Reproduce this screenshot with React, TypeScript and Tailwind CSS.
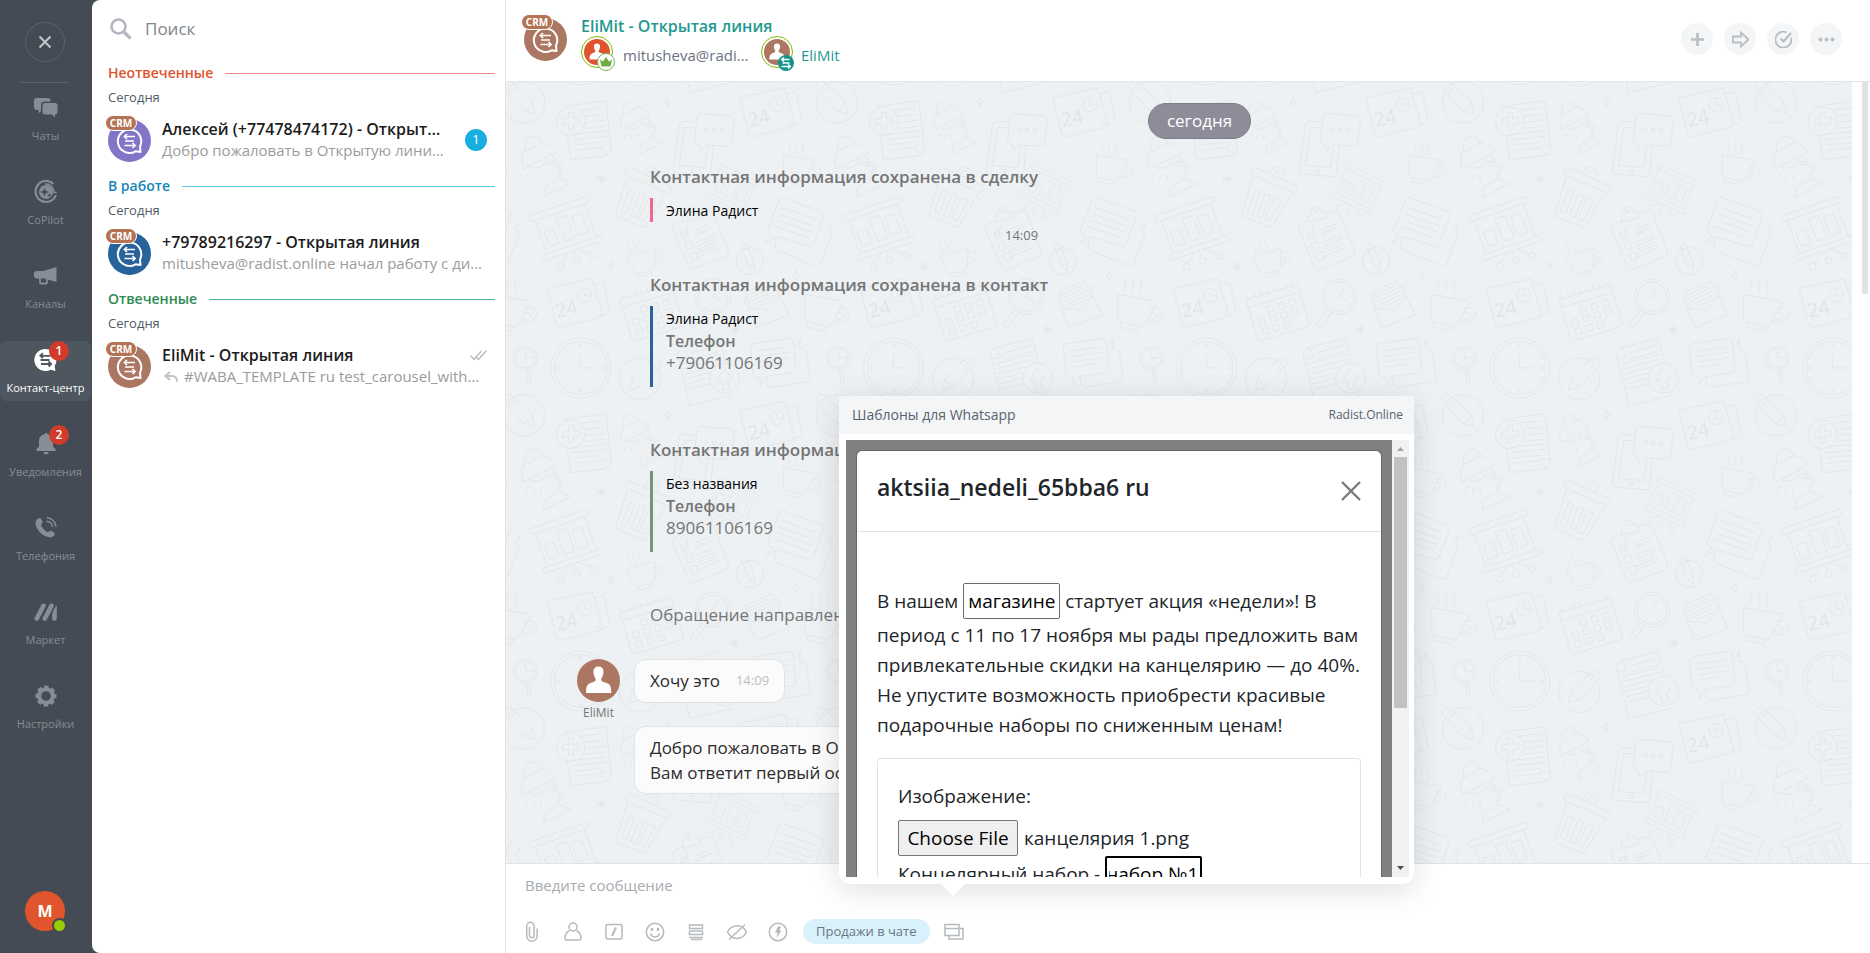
import React, { useEffect, useRef } from "react";

type Tone = "violet" | "blue" | "brown";

interface NavItem {
  title: string;
  icon: React.ElementType;
  badge?: number;
  active?: boolean;
}

interface Dialog {
  section: string;
  textColor: string;
  lineColor: string;
  tone: Tone;
  title: string;
  text: string;
  counter?: number;
  reply?: boolean;
  read?: boolean;
}

const tones: Record<Tone, string> = {
  violet: "#8474c8",
  blue: "#28629a",
  brown: "#ac7762",
};

// Sidebar icons
function ChatsIcon() {
  return (
    <svg width="24" height="20" viewBox="0 0 24 20" fill="currentColor">
      <path d="M3 0h10.500a3 3 0 0 1 3 3v.5H11a4 4 0 0 0-4 4V13L4.500 15.500V12H3a3 3 0 0 1-3-3V3a3 3 0 0 1 3-3z" />
      <path d="M11 5h10a2.500 2.500 0 0 1 2.500 2.500v6.500a2.500 2.500 0 0 1-2.500 2.500v3L18 16.500h-7A2.500 2.500 0 0 1 8.500 14V7.500A2.500 2.500 0 0 1 11 5z" />
    </svg>
  );
}

function CopilotIcon() {
  return (
    <svg width="24" height="24" viewBox="0 0 24 24" fill="none">
      <path d="M19.500 4A10.500 10.500 0 1 0 22 15" stroke="currentColor" strokeWidth="2.200" />
      <path d="M11 4a8.200 8.200 0 0 1 9 8.500h2.800" stroke="currentColor" strokeWidth="1.400" />
      <circle cx="12" cy="12" r="7" fill="currentColor" />
      <path d="M10.500 7.500l1.200 3.300 3.300 1.200-3.300 1.200-1.200 3.300-1.200-3.300L6 12l3.300-1.200z" fill="#444b54" />
      <path d="M15.500 13l.7 1.600 1.600.7-1.600.7-.7 1.600-.7-1.600-1.600-.7 1.600-.7z" fill="#444b54" />
    </svg>
  );
}

function ChannelsIcon() {
  return (
    <svg width="24" height="18" viewBox="0 0 24 18" fill="currentColor">
      <path d="M22.500 0v15L10 11.500H2L0 10V5.500L2 4h7z" />
      <path d="M6 11v4.500a1 1 0 0 0 1 1h5a1 1 0 0 0 1-1V12" fill="none" stroke="currentColor" strokeWidth="1.800" />
    </svg>
  );
}

function ContactCenterIcon() {
  return (
    <svg width="24" height="24" viewBox="0 0 24 24">
      <path d="M11.500 1a11 11 0 1 0 5 20.700L21.500 23l-.9-5A11 11 0 0 0 11.500 1z" fill="currentColor" />
      <g stroke="#4e5660" strokeWidth="1.800" fill="none">
        <path d="M6.500 7.800h10M6.500 12h9M7 16h10" />
        <path d="M9 5.200L6.300 7.800 9 10M14.500 13.500L17.200 16l-2.700 2.500" />
      </g>
    </svg>
  );
}

function BellIcon() {
  return (
    <svg width="20" height="22" viewBox="0 0 20 22" fill="currentColor">
      <path d="M10 0a1.500 1.500 0 0 1 1.500 1.300C15 2 17 4.500 17 8v5.500l2.500 2.500v2h-19v-2L3 13.500V8c0-3.500 2-6 5.500-6.700A1.500 1.500 0 0 1 10 0z" />
      <path d="M7.500 19h5a2.500 2.500 0 0 1-5 0z" />
    </svg>
  );
}

function PhoneIcon() {
  return (
    <svg width="22" height="22" viewBox="0 0 22 22" fill="none">
      <path
        d="M3.300 1.500c1.300-.8 2.300-.4 2.900.6l1.200 2.200c.5 1 .2 1.700-.6 2.500-1 .9-.7 1.700.3 3.300 1.300 2 2.600 3.300 4.300 4.300 1.300.8 2 .9 2.900 0 .9-.8 1.600-.9 2.500-.3l2.100 1.400c1 .7 1.300 1.700.4 2.700-1.800 2.200-4.500 2.700-7.800 1.400C6.500 17.600 2.200 13 .8 8.200.1 5.400.7 2.900 3.300 1.500z"
        fill="currentColor"
      />
      <path d="M11.500.8c5 0 9 3.500 9.500 9M11.500 4.300c3.300.2 5.500 2.300 6 5.500" stroke="currentColor" strokeWidth="1.500" />
    </svg>
  );
}

function MarketIcon() {
  return (
    <svg width="24" height="18" viewBox="0 0 24 18" fill="none" stroke="currentColor" strokeLinecap="round">
      <path d="M2.800 15.500L9.500 2.800M10.800 15.500L17.500 2.800" strokeWidth="4.600" />
      <path d="M18.500 14c0-4 1-7 3.800-10.500v12a1.900 1.900 0 0 1-3.800 0z" fill="currentColor" strokeWidth="1" />
    </svg>
  );
}

function GearIcon() {
  return (
    <svg width="22" height="22" viewBox="0 0 22 22" fill="none">
      <circle cx="11" cy="11" r="9" stroke="currentColor" strokeWidth="3" strokeDasharray="4.400 2.670" strokeDashoffset="2.200" />
      <circle cx="11" cy="11" r="6.800" stroke="currentColor" strokeWidth="4" />
    </svg>
  );
}

const navItems: NavItem[] = [
  { title: "Чаты", icon: ChatsIcon },
  { title: "CoPilot", icon: CopilotIcon },
  { title: "Каналы", icon: ChannelsIcon },
  { title: "Контакт-центр", icon: ContactCenterIcon, badge: 1, active: true },
  { title: "Уведомления", icon: BellIcon, badge: 2 },
  { title: "Телефония", icon: PhoneIcon },
  { title: "Маркет", icon: MarketIcon },
  { title: "Настройки", icon: GearIcon },
];

const dialogs: Dialog[] = [
  {
    section: "Неотвеченные",
    textColor: "text-[#e0532f]",
    lineColor: "bg-[#ec8a80]",
    tone: "violet",
    title: "Алексей (+77478474172) - Открытая линия",
    text: "Добро пожаловать в Открытую линию компании",
    counter: 1,
  },
  {
    section: "В работе",
    textColor: "text-[#1687b5]",
    lineColor: "bg-[#5cc6e6]",
    tone: "blue",
    title: "+79789216297 - Открытая линия",
    text: "mitusheva@radist.online начал работу с диалогом",
  },
  {
    section: "Отвеченные",
    textColor: "text-[#2f8a52]",
    lineColor: "bg-[#57b795]",
    tone: "brown",
    title: "EliMit - Открытая линия",
    text: "#WABA_TEMPLATE ru test_carousel_with_image",
    reply: true,
    read: true,
  },
];

// Round open line avatar with the CRM tag over it
function CrmAvatar({ tone }: { tone: Tone }) {
  return (
    <span className="relative block size-[43px] shrink-0">
      <svg width="43" height="43" viewBox="0 0 43 43" fill="none">
        <circle cx="21.500" cy="21.500" r="21.500" fill={tones[tone]} />
        <path d="M27.500 32.300A11.700 11.700 0 1 1 32 27.500l.5 5.500z" stroke="#fff" strokeWidth="2" strokeLinejoin="round" />
        <g stroke="#fff" strokeWidth="1.700">
          <path d="M16.500 17.500h10.500M17 22h9M16.500 26.500h10.500" />
          <path d="M19 15l-2.600 2.500L19 20M24.500 24l2.600 2.500-2.600 2.500" />
        </g>
      </svg>
      <span className="absolute -left-[3px] -top-1 flex h-4 w-[32px] items-center justify-center rounded-lg border border-white bg-[#b57355] text-[10px] font-bold leading-none text-white">
        CRM
      </span>
    </span>
  );
}

function PersonAvatar({ size, color }: { size: number; color: string }) {
  return (
    <svg width={size} height={size} viewBox="0 0 43 43">
      <circle cx="21.500" cy="21.500" r="21.500" fill={color} />
      <path
        d="M21.500 7.500c3.300 0 5 2 5 5.200 0 1.200-.2 2.200-.5 3.200-.4 1.500-1.300 2.700-1.700 3.300v2.500c1.500 1.500 6.500 2 8.200 4 1.300 1.700 1.700 4.500 1.800 8.300H9c0-3.800.5-6.600 1.800-8.300 1.700-2 6.200-2.500 7.700-4v-2.500c-.4-.6-1.200-1.800-1.600-3.300-.4-1-.5-2-.5-3.200 0-3.200 1.800-5.200 5.100-5.200z"
        fill="#fff"
      />
    </svg>
  );
}

function AppSidebar() {
  return (
    <nav className="flex w-[92px] shrink-0 flex-col items-center pr-[2px] pt-[22px]">
      <button
        aria-label="Закрыть"
        className="flex size-10 items-center justify-center rounded-full border border-[#5c636c] text-[#c3c7cb]"
      >
        <svg width="14" height="14" viewBox="0 0 14 14" stroke="currentColor" strokeWidth="2">
          <path d="M1.500 1.500l11 11M12.500 1.500l-11 11" />
        </svg>
      </button>
      <div className="mt-5 h-px w-12 bg-[#5c636c]" />
      <ul className="mt-[6px] flex w-full flex-col gap-6">
        {navItems.map((item) => (
          <li key={item.title}>
            <a
              href="#"
              className={`relative flex h-[60px] w-[91px] flex-col items-center rounded-md ${
                item.active ? "bg-[#4e5660] text-white" : "text-[#868d95]"
              }`}
            >
              <span className="flex h-[38px] items-center">
                <item.icon />
              </span>
              <span className="text-[11px] leading-[17px] whitespace-nowrap">{item.title}</span>
              {item.badge && (
                <span className="absolute left-[49px] top-0 flex size-5 items-center justify-center rounded-full bg-[#d03b2b] text-xs font-semibold text-white">
                  {item.badge}
                </span>
              )}
            </a>
          </li>
        ))}
      </ul>
      <button
        aria-label="Профиль"
        className="relative mt-auto mb-[22px] flex size-10 items-center justify-center rounded-full bg-[#e0552d] text-base font-bold text-white"
      >
        М
        <span className="absolute -bottom-[2px] -right-[2px] size-[15px] rounded-full border-2 border-[#444b54] bg-[#98cb00]" />
      </button>
    </nav>
  );
}

function DialogList() {
  return (
    <aside className="flex w-[413px] shrink-0 flex-col rounded-l-lg bg-white pl-4 pr-[10px]">
      <label className="flex h-[58px] items-center gap-[13px] pl-[2px]">
        <svg className="shrink-0" width="22" height="22" viewBox="0 0 22 22" fill="none" stroke="#b2b8bd">
          <circle cx="8.500" cy="8.500" r="7" strokeWidth="2.600" />
          <path d="M14 14l6.500 6.500" strokeWidth="3.400" />
        </svg>
        <input
          type="text"
          aria-label="Поиск"
          placeholder="Поиск"
          className="w-full bg-transparent text-[17px] text-[#525c69] outline-none placeholder:text-[#7e858d]"
        />
      </label>
      {dialogs.map((dialog) => (
        <section key={dialog.section} className="h-[113px] pt-[3px]">
          <div className="flex h-6 items-center gap-3">
            <h2 className={`text-sm font-semibold ${dialog.textColor}`}>{dialog.section}</h2>
            <span className={`h-px flex-1 ${dialog.lineColor}`} />
          </div>
          <p className="text-[13px] leading-6 text-[#525c69]">Сегодня</p>
          <a href="#" className="mt-[10px] flex">
            <CrmAvatar tone={dialog.tone} />
            <div className="ml-[11px] min-w-0 flex-1">
              <div className="flex items-center gap-4">
                <div className="min-w-0 flex-1">
                  <h3 className="truncate text-base font-semibold leading-[21px] text-[#1c1c1c]">{dialog.title}</h3>
                  {dialog.counter && (
                    <p className="truncate text-[15px] leading-[21px] text-[#9b9b9b]">{dialog.text}</p>
                  )}
                </div>
                {dialog.counter && (
                  <span className="mr-2 flex size-[22px] items-center justify-center rounded-full bg-[#1aaee0] text-[13px] text-white">
                    {dialog.counter}
                  </span>
                )}
                {dialog.read && (
                  <svg className="mr-2" width="17" height="11" viewBox="0 0 17 11" fill="none" stroke="#b9b9b9" strokeWidth="1.300">
                    <path d="M.5 5.500L4 9.500 11.500 1M5.500 6.500L8.500 9.500 16.500.5" />
                  </svg>
                )}
              </div>
              {!dialog.counter && (
                <div className="flex items-center gap-1 pr-[11px]">
                  {dialog.reply && (
                    <svg className="mx-[2px] shrink-0" width="14" height="12" viewBox="0 0 14 12" fill="none" stroke="#c3c3c3" strokeWidth="2">
                      <path d="M6 1L1.500 5 6 9M2 5h6c3 0 5 2 5 6" />
                    </svg>
                  )}
                  <p className="truncate text-[15px] leading-[21px] text-[#9b9b9b]">{dialog.text}</p>
                </div>
              )}
            </div>
          </a>
        </section>
      ))}
    </aside>
  );
}

const headerButtons = [
  { label: "Добавить", path: <path d="M8.500 2v13M2 8.500h13" strokeWidth="2.600" /> },
  { label: "Переслать", path: <path d="M1 5.500h8V1.500L16.500 8.500 9 15.500v-4H1z" strokeWidth="1.800" /> },
  {
    label: "Завершить",
    path: (
      <>
        <path d="M11.500 1.300a8 8 0 1 0 4.600 5.200" strokeWidth="1.800" />
        <path d="M5.500 7.500l3 3L16 2" strokeWidth="2.200" />
      </>
    ),
  },
  {
    label: "Ещё",
    path: (
      <g fill="currentColor" stroke="none">
        <circle cx="2.500" cy="8.500" r="1.900" />
        <circle cx="8.500" cy="8.500" r="1.900" />
        <circle cx="14.500" cy="8.500" r="1.900" />
      </g>
    ),
  },
];

function ChatHeader() {
  return (
    <header className="flex h-[82px] shrink-0 border-b border-[#e3e4e6] pl-[18px] pr-7">
      <div className="pt-[18px]">
        <CrmAvatar tone="brown" />
      </div>
      <div className="ml-[14px] pt-[15px]">
        <h1 className="text-base font-semibold leading-[23px] text-[#1f9990]">EliMit - Открытая линия</h1>
        <div className="-mt-[2px] flex items-start">
          <span className="relative flex size-8 items-center justify-center rounded-full border border-[#7bc100]">
            <PersonAvatar size={26} color="#e0532d" />
            <span className="absolute -bottom-1 -right-[3px] flex size-[18px] items-center justify-center rounded-full border border-[#76b15b] bg-white">
              <svg width="12" height="10" viewBox="0 0 12 10" fill="#6fab43">
                <path d="M1.500 9.500L0 2.500l3 2L6 0l3 4.500 3-2-1.500 7z" />
              </svg>
            </span>
          </span>
          <span className="ml-[10px] w-[127px] truncate text-[15px] leading-[38px] text-[#6a737f]">
            mitusheva@radist.online
          </span>
          <span className="relative ml-[11px] flex size-8 items-center justify-center rounded-full border border-[#7bc100]">
            <PersonAvatar size={26} color="#ac7762" />
            <span className="absolute -bottom-1 -right-[2px] flex size-4 items-center justify-center rounded-full bg-[#14938c]">
              <svg width="10" height="12" viewBox="0 0 10 12" fill="none" stroke="#fff" strokeWidth="1.300">
                <path d="M.5 2.500h8M1.500 6h7M.5 9.500h8M3 .5l-2.500 2L3 4.500M7 7.500l2.500 2L7 11.500" />
              </svg>
            </span>
          </span>
          <a href="#" className="ml-2 text-[15px] leading-[38px] text-[#1f9990]">
            EliMit
          </a>
        </div>
      </div>
      <div className="ml-auto flex gap-[11px] pt-[23px]">
        {headerButtons.map((button) => (
          <button
            key={button.label}
            aria-label={button.label}
            className="flex size-8 items-center justify-center rounded-full bg-[#f3f5f7] text-[#b9bec3]"
          >
            <svg width="17" height="17" viewBox="0 0 17 17" fill="none" stroke="currentColor">
              {button.path}
            </svg>
          </button>
        ))}
      </div>
    </header>
  );
}

function Cup() {
  return (
    <>
      <path d="M0 0l110 20c6 1 7 4 5 8L78 92c-3 5-6 6-10 5L8 83c-6-2-8-4-8-9z" />
      <path d="M8 84v14l52 13 6-14M98 44c25-10 42 2 36 20-8 22-38 22-50 14M100 56c12-4 20 0 17 9-4 10-16 12-25 7" />
      <path d="M26-50c-14 16 8 22-8 42M50-46c-14 16 8 22-8 42M74-42c-14 16 8 22-8 42" />
    </>
  );
}

function Calendar24() {
  return (
    <>
      <path d="M0 29L134 0l30 102c3 8-1 13-8 15L44 145c-8 2-14-1-17-9z" />
      <path d="M138 19l26-7c4-1 6 1 7 5l15 72c2 9 0 14-7 17l-16 5c-6 1-9-2-10-7" />
      <circle cx="112" cy="50" r="21" />
      <path d="M110 36l2 16 16-1" />
      <text x="30" y="118" fontSize="58" fill="#e0e4e7" stroke="none" transform="rotate(-13 30 118)">
        24
      </text>
    </>
  );
}

function Lamp() {
  return (
    <>
      <path d="M8 100c-8-22-6-44 4-54l-1-20C14 6 34-4 50 4c6 4 10 12 14 17 20 5 32 12 40 29z" />
      <path d="M10 48c20-6 36-20 54-28M26 92c16 12 50 4 54-26M76 84l38 8c4 1 5 4 3 8l-8 26M82 76l40 10c5 1 6 5 4 9l-10 30" />
      <path d="M70 184v-24c0-4 2-6 5-8l42-24 32 16zM94 60l8 12M24 112l-12 20M42 118l-5 16M60 116l3 18" />
      <circle cx="104" cy="74" r="4" />
    </>
  );
}

function Board() {
  return (
    <>
      <path d="M2 58L172 0c6-1 10 16 5 18L8 76c-5 1-10-15-6-18zM18 72l34 96M165 22l36 98" />
      <path d="M42 176l170-58c5-1 10 14 5 17L47 192c-5 1-9-13-5-16zM44 108l28-10 18 42-30 10zM80 68l32-10 25 66-30 10zM126 62l30-10 22 56-30 10z" />
      <path d="M116 170l-16 30M132 164l6 18M144 158l38 14" />
      <circle cx="94" cy="210" r="10" />
      <circle cx="142" cy="193" r="10" />
      <circle cx="190" cy="178" r="10" />
    </>
  );
}

function Bubbles() {
  return (
    <>
      <path d="M40 8c2-7 6-9 13-7l115 42c7 3 8 8 5 14l-30 82c-3 8-8 10-15 8L36 118 0 136l22-24-18-8z" />
      <path d="M46 30l104 36M40 50l104 36M34 68l104 36M26 86l104 36" />
      <path d="M32 122l-4 22c-1 8 2 12 8 15l112 46c8 3 14 0 17-7l32-84c3-8 0-12-6-15l12-23-22 18" />
    </>
  );
}

function Pencil() {
  return (
    <>
      <circle cx="72" cy="70" r="62" fill="#edf1f4" />
      <path d="M9 28C4 18 24 0 34 10l62 58 9 36-36-10zM27 42l22-22M19 34l22-22M69 94c10-2 24-12 27-26" fill="#edf1f4" />
    </>
  );
}

// One repeat of the office doodles, drawn on a 939 unit square
function Doodles() {
  return (
    <g id="doodles" fill="none" stroke="#e0e4e7" strokeWidth="2.600" strokeLinejoin="round">
      <Pencil />
      <path d="M190 82l128-17 16 144c1 12-8 20-22 22l-100 11-10-74M304 198c4 18 6 28 24 28M310 198l22 6" />
      <path d="M240 94l68-8M252 112l58-6M256 130l58-6M252 148l64-6M216 166l102-10M218 182l102-10M220 198l84-8M222 214l84-8" />
      <circle cx="212" cy="127" r="43" />
      <path d="M206 100h14v18l18-2v16l-18 2v18h-14v-18l-18 1v-15l18-2z" />
      <g transform="translate(360 66) scale(.86)">
        <Lamp />
      </g>
      <g transform="translate(62 170)">
        <Lamp />
      </g>
      <path d="M502 54l4 11 7 3-7 4-4 11-4-11-6-4 6-3zM888 574l4 11 5 3-5 4-4 11-4-11-5-4 5-3zM340 548l-5 24-14-2zM321 552l20 16" />
      <path d="M304 282v34M290 290l26 18M316 290l-26 18M289 299h28M704 734v38M690 744l26 18M716 744l-26 18M689 753h28" />
      <path d="M584 130l-32-3c-8 0-12 3-14 10l-18 134c-1 8 3 13 10 14l88 8c8 1 13-3 14-10l8-82M584 146l-30-1-16 114 76 7 10-66" />
      <circle cx="576" cy="276" r="5" />
      <path d="M602 103l88 8c10 1 14 6 13 14l-8 64c-1 8-6 13-15 12l-62-3-16 17-4-18c-11-2-15-6-14-14l6-66c1-8 5-14 12-14z" />
      <circle cx="619" cy="150" r="5" />
      <circle cx="642" cy="153" r="5" />
      <circle cx="666" cy="155" r="5" />
      <g transform="translate(719 27)">
        <Calendar24 />
      </g>
      <g transform="translate(142 599)">
        <Calendar24 />
      </g>
      <g transform="translate(88 352)">
        <Board />
      </g>
      <g transform="translate(688 222) rotate(44) scale(.74)">
        <Board />
      </g>
      <g transform="translate(850 227) scale(.82)">
        <Cup />
      </g>
      <g transform="translate(914 646)">
        <Cup />
      </g>
      <g transform="translate(380 532) rotate(-26) scale(.74)">
        <Cup />
      </g>
      {/* trash can */}
      <path d="M388 266l118 52c14 6 6 24-6 22l-118-50c-12-6-6-26 6-24zM382 292l-33 108c-2 8 2 12 8 15l70 28c6 2 10 0 13-5l56-94M432 284l8-14c2-6 8-8 14-5l18 7c6 3 6 8 2 14l-8 15M442 286c6-14 12-12 22-6" />
      <path d="M388 332l16 6-24 66-16-6zM418 344l16 6-26 66-16-6zM446 356l20 8-34 62-16-6z" />
      {/* checklist */}
      <path d="M550 424l-26 12c-8 4-8 10-6 16l46 108c4 10 10 13 18 10l94-36c8-4 12-10 9-18l-42-108c-4-10-9-14-18-12l-24 6M550 430l-4-18 10-8c-6-26 26-24 26-6l16 2 4 16zM586 452l46-18M590 462l46-18M586 470l34-14M586 492l58-24M590 502l58-24M594 512l50-22M588 524l66-28M592 534l66-28M541 462l18-7 8 18-18 7zM554 494l18-7 8 20-18 7zM568 526l20-7 8 20-18 8zM544 462l12 10 8-34" />
      <circle cx="567" cy="397" r="4" />
      <circle cx="750" cy="546" r="41" />
      <path d="M724 502c0-10 18-10 18 0l21 50v24l-18-16zM726 514l18-6M745 560c6 2 14-2 18-8" />
      <g transform="translate(797 355)">
        <Bubbles />
      </g>
      {/* wall calendar */}
      <path d="M359 662l156-46 36 120c0 4-2 6-6 7l-136 41c-8 3-12 1-14-5zM365 686l156-46M362 646l8 16M384 640l8 16M402 635l8 16M421 632l8 16M440 626l8 16M458 620l8 16M476 616l8 16M496 610l8 16" />
      <path d="M421 684l18-5 5 17-18 5zM454 674l18-5 5 18-18 5zM487 664l18-5 5 18-18 5zM397 722l18-5 5 18-18 5zM430 712l18-5 5 17-18 5zM463 702l18-5 5 18-18 5zM496 692l18-5 5 18-18 5zM406 750l18-5 5 17-18 5zM439 740l18-5 5 17-18 5zM472 732l18-5 5 17-18 5z" />
      {/* magnifiers */}
      <circle cx="639" cy="653" r="53" />
      <circle cx="639" cy="653" r="44" />
      <path d="M656 626l-18 26 28 18M602 694l-30 42c-4 8 8 14 14 6l32-40M598 702l14 10" />
      <circle cx="76" cy="838" r="36" />
      <circle cx="76" cy="838" r="29" />
      <path d="M74 814l4 24 24-2M79 874l4 34c1 8 10 7 10 0l-5-34M80 884l10-1" />
      {/* envelope */}
      <path d="M744 688l-12-26 10-4M744 688l24 58 100-38-28-56M744 688l60 4 36-40M750 686l-14-46 78-35 26 52M826 622l8-2 8 28M742 650l66-30M748 658l68-32M752 668l70-32M758 678l66-30M774 682l54-24" />
      <circle cx="242" cy="867" r="90" />
      <circle cx="242" cy="867" r="79" />
      <path d="M241 825v42h46" />
      <circle cx="242" cy="798" r="4" />
      <circle cx="310" cy="867" r="4" />
      <circle cx="173" cy="867" r="4" />
      <circle cx="242" cy="936" r="4" />
      <g transform="translate(492 829) scale(-1 1)">
        <Pencil />
      </g>
      {/* uploaded page */}
      <path d="M676 850l-18-72-110 28c-14 4-18 18-14 32l36 142 130-32M548 806c6 2 10 18 16 28l-26 6M572 822l84-24M574 840l84-22M544 856l118-30M548 870l118-30M552 886l104-26M556 900l80-20M562 914l70-18M566 930l66-16" />
      <circle cx="674" cy="897" r="45" fill="#edf1f4" />
      <path d="M670 870l27 28-14 3 4 28-18 3-4-28-14 2z" />
      <path d="M762 794l106-16c7-1 10 2 11 8l8 82c1 8-3 12-10 13l-80 12-16 28-1-26-10-2c-7 0-10-3-11-9l-8-76c-1-8 4-13 11-14zM770 816l94-12M774 832l94-12M776 848l94-12M778 864l76-10M884 808l18-28-4 28 12 2c6 1 8 4 9 10l11 78c1 6-1 9-8 10l-104 17c-8 1-13-2-15-10l-2-20" />
    </g>
  );
}

function ChatWallpaper() {
  return (
    <svg className="absolute inset-0 size-full" aria-hidden="true">
      <defs>
        <Doodles />
        <pattern
          id="wallpaper"
          width="939"
          height="939"
          patternUnits="userSpaceOnUse"
          patternTransform="translate(-6 -3) scale(.33333)"
        >
          <use href="#doodles" />
          <use href="#doodles" x="-939" />
          <use href="#doodles" y="-939" />
        </pattern>
      </defs>
      <rect width="100%" height="100%" fill="url(#wallpaper)" />
    </svg>
  );
}

const savedContacts = [
  { title: "Контактная информация сохранена в сделку", name: "Элина Радист", border: "border-[#f5648f]" },
  {
    title: "Контактная информация сохранена в контакт",
    name: "Элина Радист",
    phone: "+79061106169",
    border: "border-[#2a629b]",
  },
  {
    title: "Контактная информация сохранена в лид",
    name: "Без названия",
    phone: "89061106169",
    border: "border-[#6f9778]",
  },
];

function Messages() {
  return (
    <div className="relative mr-[18px] flex-1 overflow-hidden bg-[#edf1f4] text-[17px] text-[#757575]">
      <ChatWallpaper />
      <div className="relative flex flex-col pl-[71px] pt-[21px]">
        <div className="flex justify-center pr-[30px]">
          <span className="flex h-9 items-center rounded-full border border-[#7f7c8b] bg-[#8e8c99] px-[18px] text-white">
            сегодня
          </span>
        </div>
        <div className="mb-8 mt-[26px] flex flex-col items-start gap-7 pl-[73px]">
          {savedContacts.map((contact) => (
            <article key={contact.title}>
              <h2 className="font-semibold leading-6">{contact.title}</h2>
              <div className={`mt-[9px] border-l-[3px] pl-[13px] pt-[2px] leading-[22px] ${contact.border}`}>
                <p className="text-sm leading-[22px] text-black">{contact.name}</p>
                {contact.phone && (
                  <>
                    <p className="text-base font-semibold leading-[22px]">Телефон</p>
                    <p className="pb-[13px]">{contact.phone}</p>
                  </>
                )}
              </div>
              <p className="mt-[3px] text-right text-[13px] leading-5">14:09</p>
            </article>
          ))}
          <p className="leading-6">Обращение направлено на EliMit</p>
        </div>
        <div className="flex items-start gap-[14px] text-[#2b2b2b]">
          <div className="flex flex-col items-center gap-[3px]">
            <PersonAvatar size={43} color="#ac7762" />
            <span className="text-xs leading-4 text-[#757575]">EliMit</span>
          </div>
          <div className="flex h-11 items-center gap-4 rounded-xl border border-[#e0e3e5] bg-[#fbfbfb] px-[15px]">
            Хочу это
            <time className="text-[13px] text-[#bdbdbd]">14:09</time>
          </div>
        </div>
        <div className="ml-[57px] mt-[5px] w-fit rounded-xl border border-[#e0e3e5] bg-[#fbfbfb] px-[15px] py-2 leading-[25px] text-[#2b2b2b]">
          <p>Добро пожаловать в Открытую линию.</p>
          <p>Вам ответит первый освободившийся.</p>
        </div>
      </div>
    </div>
  );
}

const composerTools = [
  {
    label: "Прикрепить файл",
    path: <path d="M8.500 6v8.500a2.300 2.300 0 0 0 4.600 0V6M13 6V5a3.600 3.600 0 0 0-7.300 0v10a5.200 5.200 0 0 0 10.400 0V7.500" />,
  },
  {
    label: "Клиент",
    path: (
      <>
        <circle cx="11" cy="6" r="4" />
        <path d="M7.500 9.500C4.500 11 3 13 3 17.500c0 1 .5 1.500 1.500 1.500h13c1 0 1.500-.5 1.500-1.500 0-4.500-1.500-6.500-4.500-8" />
      </>
    ),
  },
  {
    label: "Команды",
    path: (
      <>
        <rect x="3" y="3.500" width="16" height="14.500" rx="1.500" />
        <path d="M13 6.500L9 15" strokeWidth="2" />
      </>
    ),
  },
  {
    label: "Смайлы",
    path: (
      <>
        <circle cx="11" cy="11" r="8.700" />
        <path d="M6.500 12.500c1.500 4.500 7.500 4.500 9 0" />
        <path d="M8 7v3M14 7v3" strokeWidth="2.200" />
      </>
    ),
  },
  {
    label: "Ответы",
    path: (
      <>
        <path d="M4.500 4h13v3.500h-13zM4.500 10h13v3.500h-13z" />
        <path d="M4 16.500h14M6 18.500h11" strokeWidth="1.500" />
      </>
    ),
  },
  {
    label: "Скрытый режим",
    path: (
      <>
        <path d="M1.500 11c4-8.500 15-8.500 19 0-4 8.500-15 8.500-19 0z" />
        <path d="M3 18.500L19 3.500" />
      </>
    ),
  },
  {
    label: "Быстрые действия",
    path: (
      <>
        <circle cx="11" cy="11" r="8.700" />
        <path d="M11 5.500h3l-1.500 4h2L9.500 17l1-5.500H8z" fill="currentColor" stroke="none" />
      </>
    ),
  },
];

function Composer() {
  return (
    <footer className="flex h-[90px] shrink-0 flex-col border-t border-[#e0e2e4] pl-[15px]">
      <textarea
        aria-label="Введите сообщение"
        placeholder="Введите сообщение"
        rows={1}
        className="mt-[9px] h-6 resize-none bg-transparent pl-1 text-[15px] leading-6 outline-none placeholder:text-[#a8acb1]"
      />
      <div className="mt-[22px] flex h-[25px] items-center">
        {composerTools.map((tool) => (
          <button key={tool.label} aria-label={tool.label} className="mr-[19px] text-[#b5babf]">
            <svg width="22" height="22" viewBox="0 0 22 22" fill="none" stroke="currentColor" strokeWidth="1.500">
              {tool.path}
            </svg>
          </button>
        ))}
        <button className="-ml-[5px] h-[25px] rounded-full bg-[#d9f1fb] px-[13px] text-[13px] leading-[25px] text-[#6a7683]">
          Продажи в чате
        </button>
        <button aria-label="Приложения" className="ml-[13px] text-[#b5babf]">
          <svg width="22" height="22" viewBox="0 0 22 22" fill="none" stroke="currentColor" strokeWidth="1.500">
            <path d="M2 3.500h14v11H2zM2 7.500h14M17 7.500h3v10.500H6v-3" />
          </svg>
        </button>
      </div>
    </footer>
  );
}

function TemplatePopup() {
  const variableRef = useRef<HTMLInputElement>(null);

  useEffect(() => {
    const input = variableRef.current;
    if (input) {
      input.focus({ preventScroll: true });
      input.setSelectionRange(input.value.length, input.value.length);
      input.scrollLeft = input.scrollWidth;
    }
  }, []);

  return (
    <div className="absolute bottom-[69px] left-[333px] w-[575px] rounded-b-xl bg-white shadow-[0_6px_30px_rgba(0,0,0,0.13)]">
      <div className="flex h-[38px] items-center justify-between bg-[#f3f5f7] pl-[13px] pr-[11px] text-[#59636f]">
        <h2 className="text-sm">Шаблоны для Whatsapp</h2>
        <a href="#" className="text-xs">
          Radist.Online
        </a>
      </div>
      <div className="mb-[7px] ml-[7px] mr-[5px] mt-[6px] flex h-[437px]">
        <div className="min-w-0 flex-1 overflow-hidden bg-[#808080] px-[10px] pt-[10px]">
          <div className="h-[700px] rounded-t-md border-x border-t border-[#666] bg-white text-[19px] leading-[30px] text-[#212529]">
            <div className="flex h-[81px] items-start justify-between border-b border-[#dee2e6] px-5 pt-[18px]">
              <h3 className="text-[23px] font-semibold leading-9">aktsiia_nedeli_65bba6 ru</h3>
              <button aria-label="Закрыть шаблон" className="mt-3 text-[#7b7b7b]">
                <svg width="20" height="20" viewBox="0 0 20 20" stroke="currentColor" strokeWidth="2.400">
                  <path d="M1 1l18 18M19 1L1 19" />
                </svg>
              </button>
            </div>
            <div className="px-5 pt-[50px]">
              <p className="-mr-2">
                В нашем{" "}
                <input
                  type="text"
                  aria-label="Место акции"
                  defaultValue="магазине"
                  className="my-px h-9 w-[97px] rounded-xs border border-[#6b6b6b] px-1 text-black"
                />{" "}
                стартует акция «недели»! В период с 11 по 17 ноября мы рады предложить вам привлекательные скидки на
                канцелярию — до 40%. Не упустите возможность приобрести красивые подарочные наборы по сниженным ценам!
              </p>
              <div className="mt-[18px] h-[300px] rounded border border-[#dfe1e3] px-5 pt-[22px]">
                <p>Изображение:</p>
                <div className="flex items-center gap-[6px] pt-[9px]">
                  <input id="template-image" type="file" className="sr-only" />
                  <label
                    htmlFor="template-image"
                    className="flex h-9 w-[120px] items-center justify-center rounded-xs border border-[#767676] bg-[#efefef] text-black"
                  >
                    Choose File
                  </label>
                  <span>канцелярия 1.png</span>
                </div>
                <p>
                  Концелярный набор -{" "}
                  <input
                    ref={variableRef}
                    type="text"
                    aria-label="Название набора"
                    defaultValue="набор №1"
                    className="h-9 w-[97px] rounded-xs border-2 border-black px-[2px] text-black outline-none"
                  />
                </p>
              </div>
            </div>
          </div>
        </div>
        <div className="flex w-[17px] flex-col items-center bg-[#f1f1f1]">
          <svg width="17" height="17" viewBox="0 0 17 17" fill="#a3a3a3">
            <path d="M5 11l3.500-4 3.500 4z" />
          </svg>
          <div className="h-[251px] w-[13px] bg-[#c1c1c1]" />
          <svg className="mt-auto" width="17" height="17" viewBox="0 0 17 17" fill="#505050">
            <path d="M5 6l3.500 4L12 6z" />
          </svg>
        </div>
      </div>
      <svg className="absolute -bottom-3 left-[102px]" width="24" height="12" viewBox="0 0 24 12" fill="#fff">
        <path d="M0 0h24L12 12z" />
      </svg>
    </div>
  );
}

export default function App() {
  return (
    <div className="flex h-screen overflow-hidden bg-[#444b54] font-['Open_Sans',sans-serif]">
      <AppSidebar />
      <DialogList />
      <main className="relative flex min-w-0 flex-1 flex-col border-l border-[#dfe1e3] bg-white">
        <ChatHeader />
        <div className="relative flex min-h-0 flex-1">
          <Messages />
          <div className="absolute right-[2px] top-0 h-[212px] w-[6px] bg-[#e2e2e2]" />
        </div>
        <Composer />
        <TemplatePopup />
      </main>
    </div>
  );
}
